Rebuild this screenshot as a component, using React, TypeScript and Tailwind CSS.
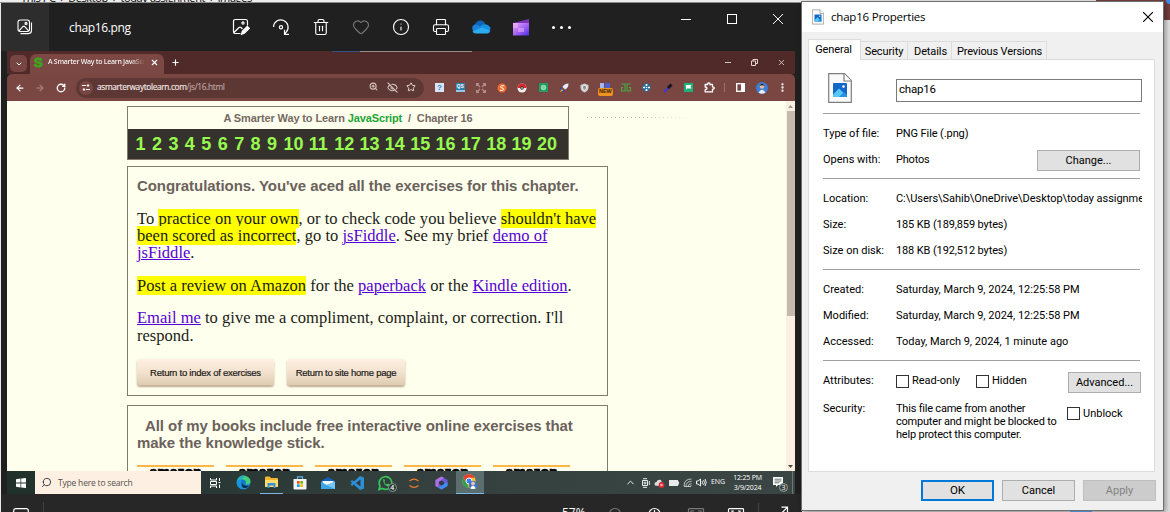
import React from "react";
import { ArrowLeft, ArrowRight, RotateCw, ZoomIn, EyeOff, Star, X, Plus, ChevronDown, ChevronUp, Search, Printer, Trash2, Heart, Info, MoreVertical } from "lucide-react";

type Kids = { children?: React.ReactNode };

/* ---------- small drawings ---------- */

const GalleryIcon = () => (
  <svg width="16" height="16" viewBox="0 0 16 16" fill="none" stroke="#fff" strokeWidth="1.1">
    <rect x="1" y="1" width="11.5" height="11.5" rx="2.2" />
    <path d="M2 11.8l4-4.3q.8-.7 1.6 0l4 4.3M3.5 14.6h8q3 0 3-3V3.5" />
    <circle cx="9" cy="4.4" r="1" />
  </svg>
);
const EditImageIcon = () => (
  <svg width="18" height="18" viewBox="0 0 18 18" fill="none" stroke="#fff" strokeWidth="1.2">
    <path d="M8.5 15.5h-5q-2 0-2-2v-10q0-2 2-2h10q2 0 2 2v4M2 14.5l5-5q1-.8 2 0l1.5 1.5" />
    <circle cx="11" cy="5" r="1.1" />
    <path d="M9.5 16.3l.8-3 5-5 2 2-5 5z" fill="#fff" />
  </svg>
);
const RotateIcon = () => (
  <svg width="18" height="18" viewBox="0 0 18 18" fill="none" stroke="#fff" strokeWidth="1.2">
    <path d="M1.500 9A7.300 7.300 0 1 1 14 14.300L13 15.500M17 16.300h-4.500v-4.500" />
    <circle cx="9" cy="9.2" r="1.6" />
  </svg>
);
const CloudIcon = () => (
  <svg width="20" height="14" viewBox="0 0 20 14">
    <path d="M4 4.5C5.5-.6 12.600-.9 14.200 4L8 8z" fill="#0f62b5" />
    <path d="M3.600 4.500Q7 4 9.500 6.500L17 12H4A4 4 0 0 1 3.600 4.500z" fill="#1b82d8" />
    <path d="M9 6.500Q11.500 3.500 15.500 4.500Q19.800 6 19.500 9.500L15 11z" fill="#1592e6" />
    <path d="M1.500 11.500L10.500 7.500L19.300 10.500Q18.600 13.500 16 13.500H4.500Q2.500 13.500 1.500 11.500z" fill="#2cadf2" />
  </svg>
);
const ClipIcon = () => (
  <svg width="17" height="17" viewBox="0 0 17 17">
    <defs>
      <linearGradient id="clip" x1="0" y1="0" x2="1" y2="1">
        <stop offset="0" stopColor="#e9a6f7" />
        <stop offset=".5" stopColor="#a866f4" />
        <stop offset="1" stopColor="#4b2ee8" />
      </linearGradient>
    </defs>
    <path d="M0 4L16 0V4H0z" fill="#7c35b5" />
    <rect y="4" width="16" height="12.500" fill="url(#clip)" />
    <path d="M0 4h5v5h-5zM5 9h6v4h-6z" fill="#efb6fb" opacity=".5" />
  </svg>
);
const ImageFile = ({ w, h }: { w: number; h: number }) => (
  <svg width={w} height={h} viewBox="0 0 24 30">
    <path d="M.7.700H16.500L23.300 7.500V29.300H.7z" fill="#fafafa" stroke="#7d7d7d" strokeWidth="1.200" />
    <path d="M16 .700V8H23.300" fill="#fff" stroke="#7d7d7d" strokeWidth="1.200" />
    <rect x="5" y="10" width="14" height="14" rx="1" fill="#1268c9" />
    <path d="M5 21.500L11 15.500L19 23q0 1-1 1H6q-1 0-1-1z" fill="#55c8f7" />
    <path d="M11 24l5-5 3 3v2z" fill="#2b90e0" />
    <circle cx="15.500" cy="13.500" r="1.300" fill="#fff" />
  </svg>
);

/* ---------- photo viewer ---------- */

const Slot = ({ children }: Kids) => <div className="flex w-10 shrink-0 items-center justify-center">{children}</div>;
const CtlSlot = ({ children }: Kids) => <div className="flex h-8 w-[46px] items-center justify-center">{children}</div>;

const ViewerHeader = () => (
  <div className="flex h-12 shrink-0 bg-[#202020]">
    <div className="flex w-12 items-center justify-center bg-[#2d2d2d]"><GalleryIcon /></div>
    <div className="flex w-[172px] items-center pt-px pl-5 font-['Open_Sans',sans-serif] text-[12px] tracking-[-0.350px] text-white">chap16.png</div>
    <Slot><EditImageIcon /></Slot>
    <Slot><RotateIcon /></Slot>
    <Slot><Trash2 size={18} color="#fff" strokeWidth={1.500} /></Slot>
    <Slot><Heart size={18} color="#777" strokeWidth={1.500} /></Slot>
    <Slot><Info size={18} color="#fff" strokeWidth={1.500} /></Slot>
    <Slot><Printer size={18} color="#fff" strokeWidth={1.500} /></Slot>
    <Slot><CloudIcon /></Slot>
    <Slot><ClipIcon /></Slot>
    <Slot>
      <div className="flex gap-[5px]">
        <i className="size-[3px] rounded-full bg-white" /><i className="size-[3px] rounded-full bg-white" /><i className="size-[3px] rounded-full bg-white" />
      </div>
    </Slot>
    <div className="mr-px ml-auto flex">
      <CtlSlot><i className="h-px w-2.5 bg-white" /></CtlSlot>
      <CtlSlot><i className="size-2.5 border border-white" /></CtlSlot>
      <CtlSlot><svg width="10" height="10" viewBox="0 0 10 10" stroke="#fff"><path d="M0 0l10 10M10 0L0 10" /></svg></CtlSlot>
    </div>
  </div>
);

/* ---------- browser ---------- */

const TabStrip = () => (
  <div className="flex h-[23px] bg-[#4f2a28] pl-[3px] pt-[3px]">
    <div className="mt-px flex size-[17px] items-center justify-center rounded-[5px] bg-[#774541]"><ChevronDown size={8} color="#fff" strokeWidth={3} /></div>
    <div className="ml-[3px] flex h-5 w-[134px] items-center rounded-t-[6px] bg-[#7b4844] pb-[3px] pl-1">
      <span className="w-[14px] font-['Liberation_Sans',sans-serif] text-[13px] font-black leading-none text-[#3fa41c] [-webkit-text-stroke:1px_#3fa41c]">S</span>
      <span className="w-[97px] overflow-hidden bg-gradient-to-r from-white from-85% to-transparent bg-clip-text font-['Open_Sans',sans-serif] text-[7px] font-semibold tracking-[-0.300px] whitespace-nowrap text-transparent">A Smarter Way to Learn JavaScript</span>
      <span className="pl-[5px]"><X size={9} color="#fff" strokeWidth={3} /></span>
    </div>
    <div className="flex w-[22px] items-center justify-center pb-[3px]"><Plus size={9} color="#fff" strokeWidth={3} /></div>
    <div className="ml-auto flex h-[17px] items-center">
      <div className="flex w-[27px] justify-center"><i className="h-px w-1.5 bg-[#d8c4c2]" /></div>
      <div className="flex w-[27px] justify-center">
        <svg width="7" height="7" viewBox="0 0 7 7" fill="none" stroke="#e5d5d3"><path d="M.5 2h4v4.500h-4zM2 2V.5h4.500v4H5" /></svg>
      </div>
      <div className="flex w-[27px] justify-center"><X size={9} color="#e5d5d3" strokeWidth={2.200} /></div>
    </div>
  </div>
);

const Ext = ({ children }: Kids) => <div className="flex w-[20.750px] shrink-0 items-center justify-center">{children}</div>;

const AddressBar = () => (
  <div className="flex h-[27px] items-center rounded-t-[5px] bg-[#7a4642]">
    <div className="flex w-[69px] pl-[8px]">
      <span className="w-5"><ArrowLeft size={10} color="#fff" strokeWidth={3} /></span>
      <span className="w-[21px]"><ArrowRight size={10} color="#b08a87" strokeWidth={2.500} /></span>
      <span><RotateCw size={10} color="#fff" strokeWidth={3.200} /></span>
    </div>
    <div className="flex h-5 w-[348px] items-center rounded-full bg-[#5d3734] pl-[3px]">
      <div className="flex size-[14px] items-center justify-center rounded-full bg-[#7a4642]">
        <svg width="8" height="7" viewBox="0 0 8 7" stroke="#fff" fill="#fff"><path d="M0 1.500h4M4 5.500h4" /><circle cx="6" cy="1.500" r=".8" /><circle cx="2" cy="5.500" r=".8" /></svg>
      </div>
      <div className="ml-1 flex-1 font-['Open_Sans',sans-serif] text-[8.300px] tracking-[-0.340px] text-[#f4e8e6] [-webkit-text-stroke:0.150px_currentColor]">asmarterwaytolearn.com<span className="text-[#bfa5a2]">/js/16.html</span></div>
      <div className="flex w-[55px] justify-between pr-[8px]">
        <ZoomIn size={9} color="#d5c0be" strokeWidth={2.800} /><EyeOff size={11} color="#d5c0be" strokeWidth={2.400} /><Star size={10} color="#e5d5d3" strokeWidth={2.400} />
      </div>
    </div>
    <div className="ml-[5px] flex">
      <Ext><div className="flex size-[9px] items-center justify-center bg-[#d6e6f7] font-['Liberation_Sans',sans-serif] text-[8px] font-bold text-[#3a78bd]">?</div></Ext>
      <Ext><div className="flex h-[9px] w-[9px] items-center justify-center border-b-2 border-[#8fc7e5] bg-[#2f7eae] font-['Liberation_Sans',sans-serif] text-[5px] font-bold text-white">QS</div></Ext>
      <Ext><svg width="10" height="10" viewBox="0 0 10 10" stroke="#ae908c" fill="none" strokeWidth="1.300"><path d="M.6 3V.600H3M7 .600h2.400V3M9.400 7v2.400H7M3 9.400H.6V7M1 1l3 3M9 1L6 4M9 9L6 6M1 9l3-3" /></svg></Ext>
      <Ext><svg width="10" height="10" viewBox="0 0 10 10"><circle cx="5" cy="5" r="4.500" fill="#ee6c2b" /><path d="M7.300 2.800H4.300Q2.600 4 4.300 4.900L6 5.200Q7.500 6.200 6 7.300H2.800" stroke="#fff" fill="none" /></svg></Ext>
      <Ext><svg width="10" height="10" viewBox="0 0 10 10"><circle cx="5" cy="5" r="4.500" fill="#f4eeee" /><path d="M.5 5a4.500 4.500 0 0 1 9 0z" fill="#db2828" /><circle cx="5" cy="5" r="1.800" fill="#333" /><circle cx="5" cy="5" r=".8" fill="#fff" /></svg></Ext>
      <Ext><svg width="9" height="9" viewBox="0 0 9 9"><rect width="9" height="9" rx="1" fill="#1f9d63" /><circle cx="4.500" cy="4.500" r="2.300" fill="#7cd0a3" stroke="#bdebd2" strokeWidth=".7" /></svg></Ext>
      <Ext><svg width="10" height="10" viewBox="0 0 10 10"><path d="M9.500.5Q5 .5 3.500 4L6 6.500Q9.500 5 9.500.5z" fill="#e6ebf8" /><path d="M3 4L.8 5.500 3.500 8zM6 7L4.500 9.500 2 7z" fill="#2a4fb2" /><path d="M3 6L.8 9.300 4 7.500z" fill="#f2bf37" /></svg></Ext>
      <Ext><svg width="9" height="10" viewBox="0 0 9 10"><path d="M4.500.5L8.500 2V5Q8 8 4.500 9.500Q1 8 .5 5V2z" fill="#cdcdcd" /><path d="M4.500 2.500L6.500 3.300V5L4.500 7.500L2.500 5V3.300z" fill="#8a8a8a" stroke="#fff" strokeWidth=".7" /></svg></Ext>
      <Ext>
        <div className="mt-[3px] flex flex-col items-center">
          <div className="flex h-[5px] gap-px"><i className="h-[5px] w-1 bg-[#a5b5ee]" /><i className="h-[5px] w-[5px] bg-[#4b62cf]" /></div>
          <div className="flex h-2 w-[15px] items-center justify-center rounded-[2px] bg-[#f0941f] font-['Liberation_Sans',sans-serif] text-[5.500px] font-bold text-[#3a2105]">NEW</div>
        </div>
      </Ext>
      <Ext><svg width="10" height="9" viewBox="0 0 10 9" fill="none" stroke="#43b044" strokeWidth="1.100"><path d="M.5 1H4V8H.600V4.500H2M9.500 1H6V8H9.400V4.500H8" /></svg></Ext>
      <Ext><svg width="9" height="9" viewBox="0 0 9 9"><circle cx="4.500" cy="4.500" r="4.200" fill="#236b98" /><path d="M4.500 1V8M1 4.500H8" stroke="#fff" strokeWidth="1.700" strokeDasharray="2 3" /><circle cx="4.500" cy="4.500" r=".8" fill="#fff" /></svg></Ext>
      <Ext><svg width="10" height="10" viewBox="0 0 10 10"><path d="M1 9L6.500 3.500" stroke="#3f3ac9" strokeWidth="2" /><path d="M5 5L8.500 1.500" stroke="#171520" strokeWidth="3" /></svg></Ext>
      <Ext><svg width="9" height="9" viewBox="0 0 9 9"><rect width="9" height="9" fill="#20ae79" /><path d="M2 7V2H7.500L6.500 3.500 7.500 5.500H3z" fill="#fff" /></svg></Ext>
      <Ext><svg width="11" height="11" viewBox="0 0 11 11" fill="none" stroke="#fff" strokeWidth="1.300" strokeLinejoin="round"><path d="M1.200 2.500H3.700Q3.500.8 4.800.8Q6.100.800 5.900 2.500H8.500V5Q10.200 4.800 10.200 6.100Q10.200 7.400 8.500 7.200V9.900H1.200V7.500Q3 7.500 3 6.200Q3 5 1.200 5z" /></svg></Ext>
    </div>
    <i className="ml-[4px] h-[9px] w-px bg-[#9c7370]" />
    <div className="ml-[11px] flex items-center">
      <svg width="9" height="9" viewBox="0 0 9 9"><rect x=".7" y=".7" width="7.600" height="7.600" fill="none" stroke="#fff" strokeWidth="1.300" /><path d="M5 0h4v9H5z" fill="#fff" /></svg>
      <svg className="ml-[11px]" width="12" height="12" viewBox="0 0 12 12"><circle cx="6" cy="6" r="6" fill="#3c7ed8" /><path d="M2.500 10.500Q6 5 9.500 10.500Q6 13 2.500 10.500z" fill="#eee" /><circle cx="6" cy="4.500" r="2.300" fill="#e0b9a0" /><path d="M3.500 4Q6-.5 8.500 4Q6 2.500 3.500 4z" fill="#2a211e" /></svg>
      <MoreVertical className="ml-[9px]" size={11} color="#fff" strokeWidth={3} />
    </div>
  </div>
);

const Hl = ({ children }: Kids) => <span className="bg-[#ffff00]">{children}</span>;
const Link = ({ children }: Kids) => <span className="text-[#5500d6] underline decoration-1 underline-offset-1">{children}</span>;
const PageButton = ({ children }: Kids) => (
  <div className="flex h-[27px] items-center justify-center rounded-[3px] border-b border-[#c7b498] bg-gradient-to-b from-[#fff0e2] via-[#f3e2cf] to-[#dfccb2] pt-0.5 text-[9.500px] tracking-[-0.250px] text-[#1c1a17] shadow-[0_1px_2px_#b7a994] [-webkit-text-stroke:0.2px_#1c1a17]">{children}</div>
);

const singles = ["1", "2", "3", "4", "5", "6", "7", "8", "9"];
const doubles = ["10", "11", "12", "13", "14", "15", "16", "17", "18", "19", "20"];

const LessonPage = () => (
  <div className="flex h-[370px] overflow-hidden bg-[#ffffee] font-['Liberation_Sans',sans-serif]">
    <div className="w-[120px] shrink-0" />
    <div className="w-[481px] shrink-0 pt-[5px]">
      <div className="h-[54px] w-[442px] border border-[#85786c]">
        <div className="flex h-[22px] items-center justify-center text-[11px] font-bold tracking-[-0.120px] whitespace-pre text-[#746a62]">A Smarter Way to Learn <span className="text-[#21a336]">JavaScript</span>{"  /  Chapter 16"}</div>
        <div className="flex h-[30px] items-center bg-[#35312d] pl-[7.500px] text-[18px] font-bold leading-none text-[#98f94f]">
          {singles.map((n) => <span key={n} className="w-[16.450px]">{n}</span>)}
          {doubles.map((n) => <span key={n} className="w-[25.350px]">{n}</span>)}
        </div>
      </div>
      <div className="mt-1.5 h-[230px] border border-[#85786c] px-[9px] pt-2.5">
        <div className="text-[15px] font-bold leading-[18px] tracking-[-0.065px] whitespace-nowrap text-[#6b625c]">Congratulations. You've aced all the exercises for this chapter.</div>
        <div className="mt-[14.500px] font-['Liberation_Serif',serif] text-[16.500px] leading-[17.400px] tracking-[0.020px] whitespace-nowrap text-[#201c16]">
          <p>To <Hl>practice on your own</Hl>, or to check code you believe <Hl>shouldn't have</Hl></p>
          <p><Hl>been scored as incorrect</Hl>, go to <Link>jsFiddle</Link>. See my brief <Link>demo of</Link></p>
          <p><Link>jsFiddle</Link>.</p>
          <p className="mt-[15px]"><Hl>Post a review on Amazon</Hl> for the <Link>paperback</Link> or the <Link>Kindle edition</Link>.</p>
          <p className="mt-[15px]"><Link>Email me</Link> to give me a compliment, complaint, or correction. I'll</p>
          <p>respond.</p>
        </div>
        <div className="mt-[15px] flex gap-[13px]">
          <div className="w-[137px]"><PageButton>Return to index of exercises</PageButton></div>
          <div className="w-[118px]"><PageButton>Return to site home page</PageButton></div>
        </div>
      </div>
      <div className="mt-[9px] h-[230px] border border-[#85786c] px-[9px] pt-[11px]">
        <div className="text-[15px] font-bold leading-[17px] tracking-[-0.065px] whitespace-nowrap text-[#6b625c]">
          <p className="pl-2">All of my books include free interactive online exercises that</p>
          <p>make the knowledge stick.</p>
        </div>
        <div className="mt-[14px] flex gap-3">
          {[0, 1, 2, 3, 4].map((n) => (
            <div key={n} className="flex h-5 w-[77px] shrink-0 justify-center border-t-2 border-[#ffb846] text-[14px] font-black leading-[11px] text-black [-webkit-text-stroke:0.7px_#000]">amazon</div>
          ))}
        </div>
      </div>
    </div>
    <div className="ml-[-21px] mt-4 h-px w-[110px] bg-[repeating-linear-gradient(90deg,#c9bba0_0_1px,transparent_1px_4px)] [mask-image:linear-gradient(90deg,#000_50%,transparent)]" />
    <div className="ml-auto flex w-[9px] flex-col items-center bg-[#fbefe2]">
      <div className="flex h-2.5 items-center"><svg width="5" height="3" viewBox="0 0 5 3"><path d="M0 3L2.500 0 5 3z" fill="#a39a8f" /></svg></div>
      <div className="h-[205px] w-2 bg-[#c4b9ab]" />
      <div className="mt-auto flex h-2.5 items-center"><svg width="5" height="3" viewBox="0 0 5 3"><path d="M0 0h5L2.500 3z" fill="#4a4541" /></svg></div>
    </div>
  </div>
);

const TaskSlot = ({ children, on }: Kids & { on?: boolean }) => (
  <div className={on ? "flex w-7 items-center justify-center border-b border-[#7db6ea] bg-[#5b6e6e]" : "flex w-[28.400px] items-center justify-center"}>{children}</div>
);
const Tray = ({ children }: Kids) => <div className="flex w-[14.200px] shrink-0 items-center justify-center">{children}</div>;

const Taskbar = () => (
  <div className="flex h-[23px] bg-gradient-to-r from-[#20302b] via-[#33403e] to-[#3b4644] font-['Open_Sans',sans-serif]">
    <div className="flex w-7 items-center justify-center">
      <svg width="10" height="10" viewBox="0 0 10 10" fill="#fff"><path d="M0 1.300l4.500-.7v4H0zM5.200.500L10 0v4.600H5.200zM0 5.400h4.500v4L0 8.700zM5.200 5.400H10V10l-4.800-.6z" /></svg>
    </div>
    <div className="flex w-[166px] items-center bg-[#fdf0e3] pl-[6px] text-[8.500px] tracking-[-0.200px] text-[#55504b]">
      <Search className="-scale-x-100" size={11} color="#333" strokeWidth={2} /><span className="ml-1.5 pt-px">Type here to search</span>
    </div>
    <TaskSlot><svg width="11" height="10" viewBox="0 0 11 10" fill="none" stroke="#fff"><path d="M.5 0v2h6V0M.5 10V8h6v2M.5 3.500h6v3h-6zM9.500 0v3M9.500 6.500v3.500" /><path d="M8.500 4.500h2" /></svg></TaskSlot>
    <TaskSlot>
      <svg width="15" height="15" viewBox="0 0 15 15"><circle cx="7.500" cy="7.500" r="7" fill="#1379c9" /><path d="M1 6Q3-.2 9 .700Q14.500 2 14.500 7Q14 10 9.500 9.500Q11 5 6.500 4.500Q3 4.500 1 6z" fill="#42cf7c" /><path d="M1 6Q4-.5 9 1.200Q5 3 5 8Q5.500 12.500 11 13.500Q2 16 .5 8z" fill="#1b9fe0" opacity=".75" /><path d="M6 8Q7 11.500 13 11Q10 14 7 12.500Q5 11 6 8z" fill="#0b2b45" /></svg>
    </TaskSlot>
    <div className="flex w-[28px] justify-center"><div className="flex w-[23px] items-center justify-center border-b border-[#7db6ea]">
      <svg width="13" height="12" viewBox="0 0 13 12"><path d="M0 1.500Q0 .5 1 .5H4.500L6 2H12q1 0 1 1V11H0z" fill="#f3b62e" /><path d="M0 4H13V11H0z" fill="#ffdc6e" /><path d="M2.500 12V7H10.500V12H8.500V9.500H4.500V12z" fill="#3b8fd6" /></svg>
    </div></div>
    <TaskSlot>
      <svg width="14" height="14" viewBox="0 0 14 14"><path d="M4.500 4V.800H9.500V4" fill="none" stroke="#59b7ec" strokeWidth="1.200" /><path d="M.5 3H13.500V12.500q0 1-1 1H1.500q-1 0-1-1z" fill="#f4f4f4" /><path d="M4 5h2.700v2.700H4z" fill="#f25022" /><path d="M7.300 5H10v2.700H7.300z" fill="#7fba00" /><path d="M4 8.300h2.700V11H4z" fill="#00a4ef" /><path d="M7.300 8.300H10V11H7.300z" fill="#ffb900" /></svg>
    </TaskSlot>
    <TaskSlot>
      <svg width="14" height="12" viewBox="0 0 14 12"><path d="M0 4L7 0l7 4v8H0z" fill="#1460b8" /><path d="M1.500 4H12.500V8H1.500z" fill="#f2f6fb" /><path d="M0 4.500L7 9l7-4.500V12H0z" fill="#3ba4ea" /><path d="M14 4.500V12L5 8z" fill="#75c6f4" /></svg>
    </TaskSlot>
    <TaskSlot>
      <svg width="14" height="14" viewBox="0 0 14 14"><path d="M10 0l4 1.500v11L10 14 0.500 5.500 2 4l8.500 6.500v-7L2 10 .5 8.500z" fill="#2d8fd8" /></svg>
    </TaskSlot>
    <TaskSlot>
      <div className="relative ml-0.5 flex">
        <svg width="17" height="16" viewBox="0 0 17 16"><path d="M1 14.500l1-3.500A6.300 6.300 0 1 1 4.500 13.500z" fill="none" stroke="#35c75a" strokeWidth="1.700" /><path d="M5 4.500q1-1 1.500 0l.5 1.500-.7.900q1 2 2.500 2.500l1-1 2 1q-.3 2-2.300 2Q5.500 10 5 4.500z" fill="#35c75a" /></svg>
        <span className="absolute -right-0.5 -bottom-px flex size-[9px] items-center justify-center rounded-full border border-[#8d9794] bg-[#26322f] text-[7px] leading-none font-semibold text-white">4</span>
      </div>
    </TaskSlot>
    <TaskSlot><svg width="12" height="12" viewBox="0 0 12 12" fill="none" stroke="#ed7a2b" strokeWidth="1.400"><path d="M1.500 4Q6 .3 10.500 4M1.500 8.500Q6 12.200 10.500 8.500" /></svg></TaskSlot>
    <TaskSlot><svg width="13" height="14" viewBox="0 0 13 14"><path d="M6.500.5L12.500 4V10L6.500 13.500L.5 10V4z" fill="#6b5bd9" /><path d="M6.500.5L.5 4v6l3 1.500V6L9 2z" fill="#b26fe0" /><path d="M3.500 11.500L12.500 6V10L6.500 13.500z" fill="#3b8ff0" /><path d="M6.500 4.500L9 6V8L6.500 9.500 4 8V6z" fill="#2f3d40" /></svg></TaskSlot>
    <TaskSlot on>
      <svg width="16" height="16" viewBox="0 0 16 16"><circle cx="7" cy="7" r="6.700" fill="#f6c42d" /><path d="M1.200 3.500A6.700 6.700 0 0 1 12.900 3.800H7L4 8z" fill="#e5402f" /><path d="M1.200 3.500L5 9.500 6.800 13.700A6.700 6.700 0 0 1 1.200 3.500z" fill="#2fa14d" /><circle cx="7" cy="7" r="3" fill="#3a7ff0" stroke="#fff" /><circle cx="11" cy="11" r="4.300" fill="#3f73c9" /><circle cx="11" cy="9.500" r="1.900" fill="#e9c2a8" /><path d="M8.200 14.200Q11 9.500 13.800 14.200Q11 16 8.200 14.200z" fill="#fff" /></svg>
    </TaskSlot>
    <div className="ml-auto flex text-white">
      <Tray><ChevronUp size={11} strokeWidth={2} /></Tray>
      <Tray><svg width="9" height="10" viewBox="0 0 9 10" fill="none" stroke="#fff" strokeWidth=".9"><path d="M2 .7h4M2 9.300h4M1.500 2.500h5v5h-5zM8.300 3v4" /><circle cx="4" cy="5" r="1" /></svg></Tray>
      <Tray><svg width="11" height="10" viewBox="0 0 11 10"><path d="M1 7.500Q-.5 4.500 2.500 4Q3.500 1 7 2L8 5 5 8z" fill="#ddd" /><circle cx="7.500" cy="7" r="2.900" fill="#df2b36" /><path d="M6.500 6l2 2M8.500 6l-2 2" stroke="#fff" strokeWidth=".8" /></svg></Tray>
      <Tray><svg width="10" height="6" viewBox="0 0 10 6"><path d="M0 0H9V1.500H10V4.500H9V6H0z" fill="#e9e9e9" /></svg></Tray>
      <Tray><svg width="9" height="9" viewBox="0 0 9 9" fill="none" stroke="#c9cfcd" strokeWidth=".9"><path d="M1 8Q1 1 8.500 1M3 8.500Q3 3.500 8.500 3.300M5 8.500Q5 6 8.500 5.600M7 8.500l1.500-1M1 8.500h7" /></svg></Tray>
      <Tray><svg width="11" height="9" viewBox="0 0 11 9" fill="none" stroke="#fff" strokeWidth=".9"><path d="M.5 3H2L4.500 1V8L2 6H.5zM6 3q1 1.500 0 3M7.500 2q2 2.500 0 5M9 1q2.500 3.500 0 7" /></svg></Tray>
      <div className="flex w-[18px] items-center justify-center text-[7px]">ENG</div>
      <div className="flex w-[41px] flex-col items-center justify-center text-[7px] leading-[10px] tracking-[-0.2px] whitespace-nowrap"><span>12:25 PM</span><span>3/9/2024</span></div>
      <div className="flex w-[25px] items-center justify-center border-r border-[#707977]">
        <div className="relative flex">
          <svg width="14" height="14" viewBox="0 0 14 14"><path d="M0 1H10V9H5L3 11V9H0z" fill="#fff" /><path d="M1.500 3.200h7M1.500 5h7M1.500 6.800h5" stroke="#49524f" strokeWidth=".8" /></svg>
          <span className="absolute -right-px -bottom-0.5 flex size-[9px] items-center justify-center rounded-full border border-[#9ba3a0] bg-[#38433f] text-[7px] leading-none text-white">3</span>
        </div>
      </div>
      <div className="w-[2px]" />
    </div>
  </div>
);

const ViewerFooter = () => (
  <div className="flex h-[18px] shrink-0 overflow-hidden bg-[#272727] text-white">
    <svg className="mt-3.5 ml-3 shrink-0" width="16" height="14" viewBox="0 0 16 14" fill="none" stroke="#fff" strokeWidth="1.200"><rect x=".7" y=".7" width="14.600" height="12" rx="2" /></svg>
    <i className="mt-2 ml-3.5 h-3 w-px shrink-0 bg-[#414141]" />
    <div className="mt-[11px] ml-[518px] w-[52px] shrink-0 font-['Open_Sans',sans-serif] text-[12px] leading-[16px]">57%</div>
    <svg className="mt-3.5 shrink-0 overflow-visible" width="180" height="16" viewBox="0 0 180 16" fill="none" stroke="#fff" strokeWidth="1.200">
      <circle cx="1" cy="6" r="5.500" stroke="#777" />
      <circle cx="40.500" cy="6" r="5.500" /><path d="M40.500 2v6" />
      <path d="M74.500 5V1.500Q74.500.7 75.500.7H88.500Q89.500.7 89.500 1.500V5M77 5V3h3M87 5V3h-3" stroke="#777" />
      <path d="M114.500 5V1.500Q114.500.7 115.500.7H128.500Q129.500.7 129.500 1.500V5M118 5V3h2M126 5V3h-2" />
      <path d="M144.500 -5v10" stroke="#414141" />
      <path d="M167.500 -.8h6v5M173.500 -.8l-6.500 6.500" />
    </svg>
  </div>
);

const PhotoViewer = () => (
  <div className="absolute top-[3px] left-px flex h-[509px] w-[801px] flex-col bg-[#202020]">
    <ViewerHeader />
    <div className="ml-1.5 h-[443px] w-[788px] overflow-hidden">
      <TabStrip />
      <AddressBar />
      <LessonPage />
      <Taskbar />
    </div>
    <ViewerFooter />
    <div className="absolute top-12 left-[331px] flex h-px w-[140px]"><i className="w-7 bg-[#33538a]" /><i className="flex-1 bg-[#9c8a88]" /></div>
  </div>
);

/* ---------- properties dialog ---------- */

const Row = ({ label, children }: Kids & { label: string }) => (
  <div className="flex h-[26px] items-center whitespace-nowrap"><span className="w-[73px] shrink-0">{label}</span>{children}</div>
);
const Rule = () => <div className="h-px w-[317px] bg-[#a0a0a0]" />;
const Check = ({ children }: Kids) => (
  <label className="flex items-center gap-[3px]"><i className="size-[13px] border border-[#333] bg-white" />{children}</label>
);
const Btn = ({ children }: Kids) => (
  <div className="flex h-[21px] items-center justify-center border border-[#adadad] bg-[#e1e1e1] pt-[2px]">{children}</div>
);

const Properties = () => (
  <div className="absolute top-px left-[801px] flex h-[510px] w-[363px] flex-col border border-[#6f6f6f] bg-[#f0f0f0] font-['Roboto',sans-serif] text-[11px] text-black shadow-[2px_2px_6px_rgba(0,0,0,0.4)]">
    <div className="flex h-[30px] shrink-0 items-center bg-white pr-[10px] pl-[10px]">
      <ImageFile w={12} h={16} />
      <span className="ml-[7px] flex-1 font-['Open_Sans',sans-serif] text-[11.500px] tracking-[-0.200px]">chap16 Properties</span>
      <svg width="10" height="10" viewBox="0 0 10 10" stroke="#000" strokeWidth="1.100"><path d="M0 0l10 10M10 0L0 10" /></svg>
    </div>
    <div className="mt-[7px] ml-[6px] flex h-5 shrink-0 items-end tracking-[-0.100px]">
      <div className="z-10 mb-[-1px] flex h-[21px] w-[53px] items-center justify-center border border-b-0 border-[#dcdcdc] bg-white pt-px pr-0.5">General</div>
      <div className="flex h-[18px] w-[47px] items-center justify-center border-t border-r border-[#dcdcdc] pt-[3px]">Security</div>
      <div className="flex h-[18px] w-[44px] items-center justify-center border-t border-r border-[#dcdcdc] pt-[3px] pl-0.5">Details</div>
      <div className="flex h-[18px] w-[95px] items-center justify-center border-t border-r border-[#dcdcdc] pt-[3px] pl-px tracking-[-0.150px]">Previous Versions</div>
    </div>
    <div className="ml-[6px] flex h-[413px] w-[347px] shrink-0 flex-col border border-[#dcdcdc] bg-white pl-[14px]">
      <div className="flex h-[53px] items-start pt-[13px] pl-[5px]">
        <ImageFile w={24} h={30} />
        <div className="mt-[6px] ml-[44px] flex h-[23px] w-[246px] items-center border border-[#7a7a7a] pb-px pl-[2px] tracking-[-0.200px] text-[11.500px]">chap16</div>
      </div>
      <Rule />
      <div className="pt-[7px] pb-[5px]">
        <Row label="Type of file:"><span className="tracking-[-0.1px]">PNG File (.png)</span></Row>
        <Row label="Opens with:"><span className="w-[141px] tracking-[-0.2px]">Photos</span><div className="w-[103px]"><Btn>Change...</Btn></div></Row>
      </div>
      <Rule />
      <div className="pt-[7px] pb-[5px]">
        <Row label="Location:"><span className="w-[246px] overflow-hidden tracking-[-0.040px]">C:\Users\Sahib\OneDrive\Desktop\today assignme</span></Row>
        <Row label="Size:"><span className="tracking-[-0.120px]">185 KB (189,859 bytes)</span></Row>
        <Row label="Size on disk:"><span className="tracking-[-0.120px]">188 KB (192,512 bytes)</span></Row>
      </div>
      <Rule />
      <div className="pt-[7px] pb-[5px]">
        <Row label="Created:">Saturday, March 9, 2024, 12:25:58 PM</Row>
        <Row label="Modified:">Saturday, March 9, 2024, 12:25:58 PM</Row>
        <Row label="Accessed:">Today, March 9, 2024, 1 minute ago</Row>
      </div>
      <Rule />
      <div className="pt-[7px]">
        <Row label="Attributes:">
          <div className="w-20"><Check>Read-only</Check></div>
          <div className="w-[92px]"><Check>Hidden</Check></div>
          <div className="mt-0.5 w-[73px]"><Btn>Advanced...</Btn></div>
        </Row>
        <div className="mt-[8px] flex leading-[13px] whitespace-nowrap">
          <span className="w-[73px]">Security:</span>
          <div className="w-[171px] tracking-[-0.210px]"><p>This file came from another</p><p>computer and might be blocked to</p><p>help protect this computer.</p></div>
          <div className="pt-[5px]"><Check>Unblock</Check></div>
        </div>
      </div>
    </div>
    <div className="mt-2 flex justify-end gap-2 pr-[7px]">
      <div className="flex h-[21px] w-[73px] items-center justify-center border-2 border-[#0078d7] bg-[#e1e1e1] pt-px text-[11.500px]">OK</div>
      <div className="w-[73px]"><Btn>Cancel</Btn></div>
      <div className="flex h-[21px] w-[73px] items-center justify-center border border-[#bfbfbf] bg-[#cccccc] pt-[2px] text-[#838383]">Apply</div>
    </div>
  </div>
);

export default function App() {
  return (
    <div className="relative h-[512px] w-[1170px] overflow-hidden bg-[#e8e8e8]">
      <div className="flex h-[3px] items-end overflow-hidden border-b border-[#8c8c8c] bg-[#ededed] pl-[21px] font-['Open_Sans',sans-serif] text-[11px] leading-[8px] tracking-[-0.400px] whitespace-pre text-black">{"This PC  ›  Desktop  ›  today assignment  ›  images"}</div>
      <div className="absolute top-0 right-0 flex h-5 w-[74px] justify-end bg-[#75413f]"><i className="size-1 rounded-bl bg-[#3b8df0]" /></div>
      <PhotoViewer />
      <Properties />
      <div className="absolute right-[78px] bottom-0 h-px w-[22px] bg-[#4c86c9]" />
    </div>
  );
}
